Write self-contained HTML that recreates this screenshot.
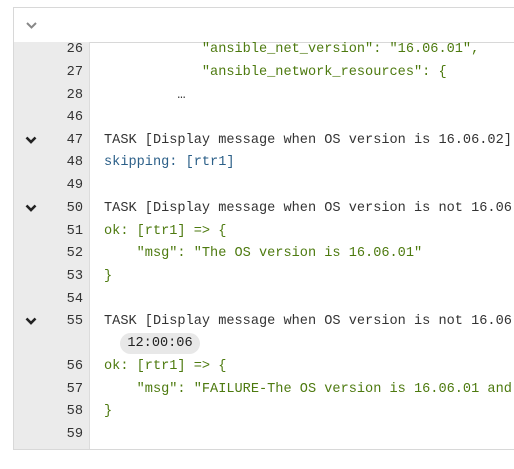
<!DOCTYPE html>
<html><head><style>
html,body{margin:0;width:514px;height:469px;background:#fff;overflow:hidden;font-family:"Liberation Mono",monospace;}
.wrap{position:absolute;left:0;top:0;width:514px;height:469px;overflow:hidden;}
.box{position:absolute;left:13px;top:7px;width:510px;height:443px;border:1px solid #d8d8d8;box-sizing:border-box;}
.hdr{position:absolute;left:0;top:0;right:0;height:34px;border-bottom:1px solid #d8d8d8;background:#fff;}
.gut{position:absolute;left:0;top:34px;width:75px;bottom:0;background:#ebebeb;border-right:1px solid #dcdcdc;}
.ln{position:absolute;left:0;height:23px;line-height:23px;font-size:13.6px;white-space:pre;width:500px;overflow:hidden;}
.n{position:absolute;left:0;width:69px;text-align:right;color:#333;}
.t{position:absolute;left:90px;color:#333;}
.g{color:#4d7a0f}.b{color:#2b5f88}
.chev{position:absolute;left:11px;top:7px;}
.pill{position:absolute;left:106px;width:80px;height:21px;border-radius:11px;background:#e8e8e8;font-size:13.6px;line-height:21px;text-align:center;color:#222;}
</style></head><body><div class="wrap">
<div class="box">
<div class="hdr"><svg style="position:absolute;left:12px;top:14px" width="11" height="7" viewBox="0 0 11 7"><path d="M1 1l4.5 4.5L10 1" stroke="#888" stroke-width="2" fill="none"/></svg></div>
<div class="gut"></div>
</div>
<div style="position:absolute;left:14px;top:0;width:500px;height:469px;overflow:hidden">
<div class="ln" style="top:38px"><span class="n">26</span><span class="t g">            "ansible_net_version": "16.06.01",</span></div>
<div class="ln" style="top:61px"><span class="n">27</span><span class="t g">            "ansible_network_resources": {</span></div>
<div class="ln" style="top:84px"><span class="n">28</span><span class="t">         …</span></div>
<div class="ln" style="top:106px"><span class="n">46</span></div>
<div class="ln" style="top:129px"><svg class="chev" width="12" height="8" viewBox="0 0 12 8"><path d="M1.5 1.5l4.5 4.5 4.5-4.5" stroke="#222" stroke-width="2.6" fill="none"/></svg><span class="n">47</span><span class="t">TASK [Display message when OS version is 16.06.02]</span></div>
<div class="ln" style="top:151px"><span class="n">48</span><span class="t b">skipping: [rtr1]</span></div>
<div class="ln" style="top:174px"><span class="n">49</span></div>
<div class="ln" style="top:197px"><svg class="chev" width="12" height="8" viewBox="0 0 12 8"><path d="M1.5 1.5l4.5 4.5 4.5-4.5" stroke="#222" stroke-width="2.6" fill="none"/></svg><span class="n">50</span><span class="t">TASK [Display message when OS version is not 16.06.01]</span></div>
<div class="ln" style="top:220px"><span class="n">51</span><span class="t g">ok: [rtr1] =&gt; {</span></div>
<div class="ln" style="top:242px"><span class="n">52</span><span class="t g">    "msg": "The OS version is 16.06.01"</span></div>
<div class="ln" style="top:265px"><span class="n">53</span><span class="t g">}</span></div>
<div class="ln" style="top:288px"><span class="n">54</span></div>
<div class="ln" style="top:310px"><svg class="chev" width="12" height="8" viewBox="0 0 12 8"><path d="M1.5 1.5l4.5 4.5 4.5-4.5" stroke="#222" stroke-width="2.6" fill="none"/></svg><span class="n">55</span><span class="t">TASK [Display message when OS version is not 16.06.01]</span></div>
<div class="pill" style="top:333px">12:00:06</div>
<div class="ln" style="top:355px"><span class="n">56</span><span class="t g">ok: [rtr1] =&gt; {</span></div>
<div class="ln" style="top:378px"><span class="n">57</span><span class="t g">    "msg": "FAILURE-The OS version is 16.06.01 and</span></div>
<div class="ln" style="top:400px"><span class="n">58</span><span class="t g">}</span></div>
<div class="ln" style="top:423px"><span class="n">59</span></div>
</div>
</div></body></html>
